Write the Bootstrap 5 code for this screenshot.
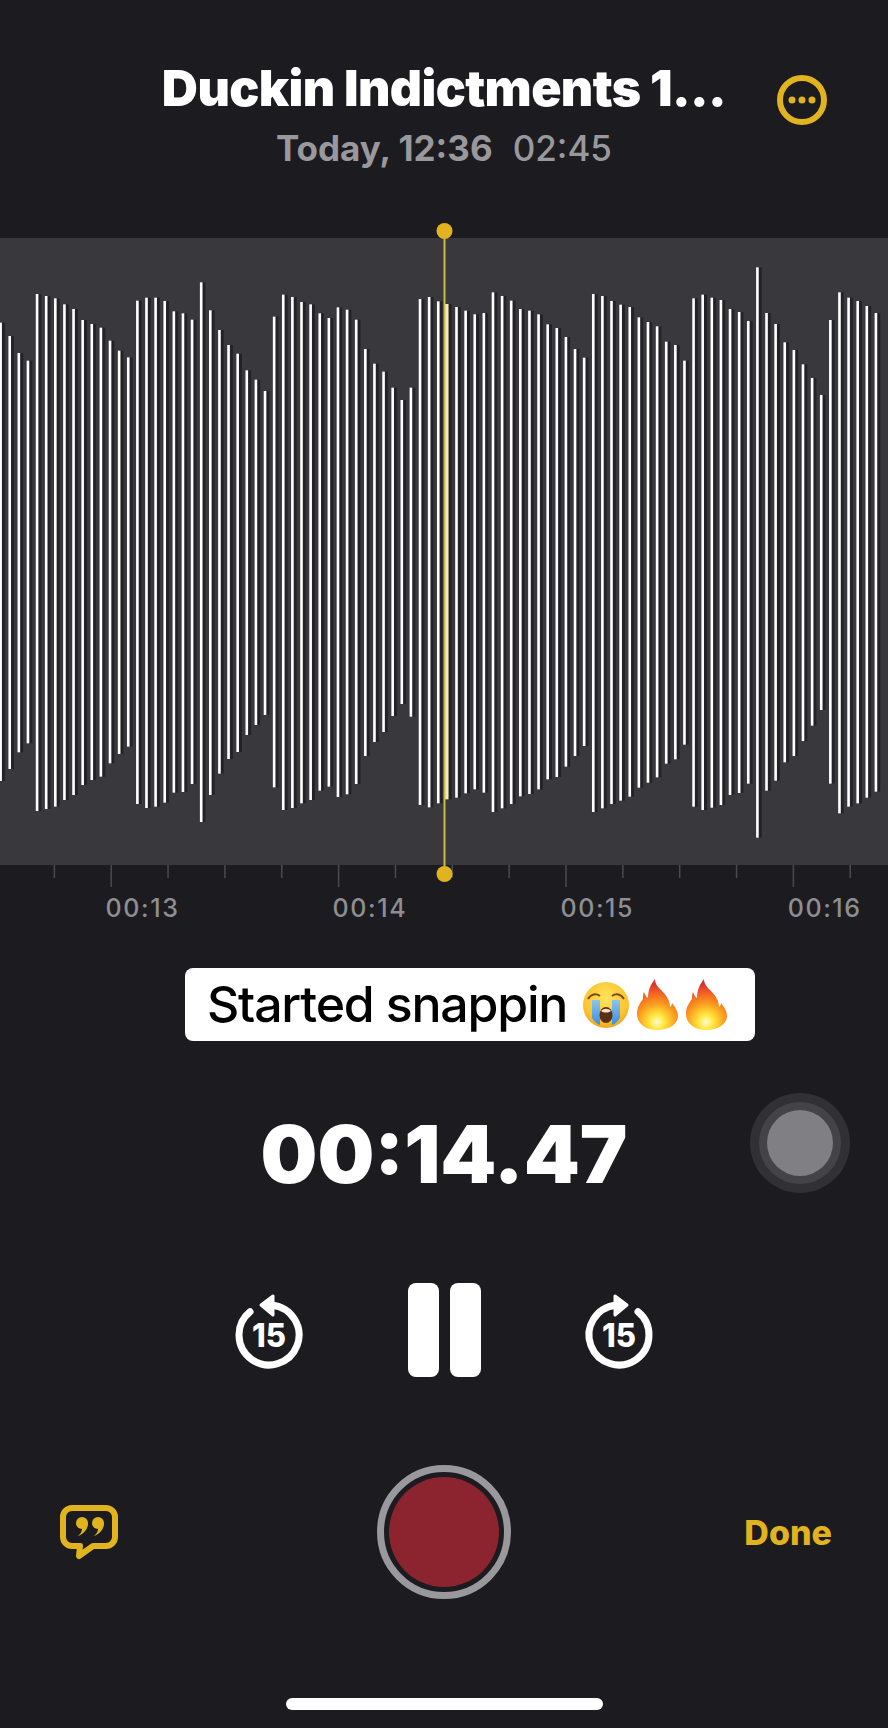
<!DOCTYPE html>
<html lang="en">
<head>
  <meta charset="UTF-8" />
  <meta name="viewport" content="width=device-width, initial-scale=1.0"/>
  <title>Voice Memos</title>
  <link href="https://cdn.jsdelivr.net/npm/bootstrap@5.3.0/dist/css/bootstrap.min.css" rel="stylesheet"/>
  <style>
    body {
      background-color: #1c1b1f;
      font-family: 'Inter', 'Liberation Sans', sans-serif;
      color: #fff;
      width: 888px;
      height: 1728px;
      overflow: hidden;
    }
    .three-col {
      display: grid;
      grid-template-columns: 1fr auto 1fr;
      align-items: center;
    }
    .top-head { height: 220px; padding-top: 60px; align-items: start; }
    .memo-title {
      font-size: 50px;
      font-weight: 900;
      line-height: 56px;
      letter-spacing: -0.6px;
      white-space: nowrap;
    }
    .memo-meta {
      font-size: 35px;
      line-height: 40px;
      color: #98989d;
      margin-top: 12px;
      font-weight: 700;
      text-align: center;
    }
    .memo-meta span { font-weight: 500; margin-left: 20px; }
    .more-btn { justify-self: start; margin: 14px 0 0 50px; }
    .wave-stage { height: 705px; }
    .wave-stage svg { display: block; }
    .tick-label { font-size: 25px; font-weight: 500; fill: #8e8e93; letter-spacing: 1.6px; font-family: 'Inter', sans-serif; }
    .caption-box {
      margin: 43px 0 0 185px;
      width: 570px;
      height: 73px;
      background: #fff;
      border-radius: 8px;
      color: #000;
      padding-left: 22px;
      font-size: 50px;
      font-family: 'Inter', 'Liberation Sans', sans-serif;
      font-weight: 500;
      letter-spacing: -1.2px;
    }
    .time-row { margin-top: 52px; height: 100px; }
    .time-text {
      font-size: 80px;
      font-weight: 900;
      line-height: 78px;
      margin-top: 22px;
    }
    .jog-outer {
      justify-self: start;
      margin-left: 140px;
      width: 66px;
      height: 66px;
      border-radius: 50%;
      background: #808084;
      box-shadow: 0 0 0 8px #444448, 0 0 0 17px #313135;
    }
    .transport { margin-top: 87px; gap: 84px; }
    .transport svg text { font-family: 'Inter', sans-serif; font-weight: 800; fill: #fff; }
    .pause-icon { margin-top: 3px; gap: 11px; }
    .pause-icon i { display: block; width: 31px; height: 94px; background: #fff; border-radius: 8px; }
    .bottom-row { margin-top: 84px; height: 135px; }
    .rec-ring {
      width: 134px;
      height: 134px;
      border-radius: 50%;
      border: 7px solid #98989d;
      padding: 5px;
    }
    .rec-dot { width: 100%; height: 100%; border-radius: 50%; background: #8c2430; }
    .quote-btn { justify-self: start; margin-left: 60px; }
    .done-btn {
      justify-self: end;
      margin: 2px 56px 0 0;
      color: #e0b31f;
      font-size: 34px;
      font-weight: 800;
    }
    .home-bar {
      margin: 99px auto 0;
      width: 317px;
      height: 12px;
      border-radius: 6px;
      background: #fff;
    }
  </style>
</head>
<body>
  <svg width="0" height="0" class="position-absolute">
    <defs>
      <radialGradient id="fireFill" gradientUnits="userSpaceOnUse" cx="20" cy="43" r="38">
        <stop offset="0" stop-color="#fffbd0"/>
        <stop offset="0.2" stop-color="#ffe63c"/>
        <stop offset="0.5" stop-color="#fb9a1e"/>
        <stop offset="0.8" stop-color="#ef5a26"/>
        <stop offset="1" stop-color="#d9322a"/>
      </radialGradient>
      <radialGradient id="faceFill" cx="0.5" cy="0.35" r="0.7">
        <stop offset="0" stop-color="#ffe45c"/>
        <stop offset="0.7" stop-color="#fcc22e"/>
        <stop offset="1" stop-color="#ef9a1c"/>
      </radialGradient>
      <linearGradient id="tearFill" x1="0" y1="0" x2="0" y2="1">
        <stop offset="0" stop-color="#8cc4ee"/>
        <stop offset="1" stop-color="#3b8fe0"/>
      </linearGradient>
      <symbol id="fireGlyph" viewBox="0 0 41 51">
        <path fill="url(#fireFill)" d="M20 51C8 51 0 44 0 35c0-7 3-11 6-15 0-3 0-5 1-7 1 3 2 5 4 6 0-8 3-14 7-19 0 5 3 8 7 12 5 5 8 10 8 16 1-1 2-2 2-4 3 4 6 8 6 13 0 8-9 14-21 14z"/>
      </symbol>
    </defs>
  </svg>

  <header class="three-col top-head">
    <div></div>
    <div>
      <div class="memo-title">Duckin Indictments 1...</div>
      <div class="memo-meta">Today, 12:36<span>02:45</span></div>
    </div>
    <svg class="more-btn" width="52" height="52" viewBox="0 0 52 52">
      <circle cx="26" cy="26" r="22" fill="none" stroke="#e0b31f" stroke-width="6"/>
      <circle cx="16" cy="26" r="3.5" fill="#e0b31f"/>
      <circle cx="26" cy="26" r="3.5" fill="#e0b31f"/>
      <circle cx="36" cy="26" r="3.5" fill="#e0b31f"/>
    </svg>
  </header>

  <section class="wave-stage">
    <svg id="wave" width="888" height="705" viewBox="0 0 888 705"></svg>
  </section>

  <div class="caption-box d-flex align-items-center">
    <span>Started snappin</span>
    <svg class="ms-3" width="46" height="48" viewBox="0 0 46 48">
      <circle cx="23" cy="24" r="23" fill="url(#faceFill)"/>
      <path d="M5 18c3-5 8-6 12-3M41 18c-3-5-8-6-12-3" fill="none" stroke="#7a4a12" stroke-width="2"/>
      <path d="M9 19h8v25c-3-1-6-4-8-7zM29 19h8v18c-2 3-5 6-8 7z" fill="url(#tearFill)"/>
      <ellipse cx="23" cy="34" rx="6.500" ry="8" fill="#5b2f12"/>
      <path d="M18 30c3-3 7-3 10 0-3 2-7 2-10 0z" fill="#f3e2c6"/>
    </svg>
    <svg class="ms-2" width="41" height="51"><use href="#fireGlyph"/></svg>
    <svg class="ms-2" width="41" height="51"><use href="#fireGlyph"/></svg>
  </div>

  <div class="three-col time-row">
    <div></div>
    <div class="time-text">00:14.47</div>
    <div class="jog-outer"></div>
  </div>

  <div class="transport d-flex justify-content-center align-items-start">
    <svg width="110" height="100" viewBox="-6 0 110 100">
      <path d="M30 31.800A30 30 0 1 0 52 25.150" fill="none" stroke="#fff" stroke-width="7" stroke-linecap="round"/>
      <path d="M41 25 53 16V35z" fill="#fff" stroke="#fff" stroke-width="3" stroke-linejoin="round"/>
      <text x="49" y="67" font-size="33" text-anchor="middle" textLength="34" lengthAdjust="spacingAndGlyphs">15</text>
    </svg>
    <div class="pause-icon d-flex"><i></i><i></i></div>
    <svg width="110" height="100" viewBox="-5 0 110 100">
      <path d="M68 31.800A30 30 0 1 1 46 25.150" fill="none" stroke="#fff" stroke-width="7" stroke-linecap="round"/>
      <path d="M57 25 45 16V35z" fill="#fff" stroke="#fff" stroke-width="3" stroke-linejoin="round"/>
      <text x="49" y="67" font-size="33" text-anchor="middle" textLength="34" lengthAdjust="spacingAndGlyphs">15</text>
    </svg>
  </div>

  <div class="three-col bottom-row">
    <svg class="quote-btn" width="58" height="56" viewBox="0 0 58 56">
      <path d="M12 4H46A9 9 0 0 1 55 13V33A9 9 0 0 1 46 42H33L19 52 20 42H12A9 9 0 0 1 3 33V13A9 9 0 0 1 12 4Z" fill="none" stroke="#e0b31f" stroke-width="6" stroke-linejoin="round"/>
      <g fill="#e0b31f">
        <circle cx="22" cy="19" r="6"/>
        <path d="M28 19c0 6-4 11-10 13 2-2 4-4 4-7z"/>
        <circle cx="38" cy="19" r="6"/>
        <path d="M44 19c0 6-4 11-10 13 2-2 4-4 4-7z"/>
      </g>
    </svg>
    <div class="rec-ring"><div class="rec-dot"></div></div>
    <div class="done-btn">Done</div>
  </div>

  <div class="home-bar"></div>

  <script src="https://cdn.jsdelivr.net/npm/bootstrap@5.3.0/dist/js/bootstrap.bundle.min.js"></script>
  <script>
    // bar ends read off the reference, in 1/3 px from y=230 and y=680
    const tops = [278,318,369,392,192,198,205,223,237,270,282,293,332,362,382,212,203,203,213,244,250,269,157,241,300,345,371,421,449,483,260,194,201,216,223,250,264,232,239,269,357,401,425,473,510,473,207,201,214,
      222,231,242,253,249,187,198,212,237,242,253,283,294,321,357,383,192,198,213,224,231,262,276,289,335,345,392,205,194,203,210,237,246,273,112,249,282,337,360,403,444,495,270,187,203,213,228,249];
    const bottoms = [303,267,217,190,393,387,380,360,345,315,300,290,250,222,200,372,384,380,368,338,336,312,426,345,281,237,216,165,135,105,322,390,384,370,360,332,320,351,343,312,228,186,156,108,72,110,375,382,370,
      358,353,340,328,338,396,385,372,349,342,328,298,291,260,228,198,396,385,372,362,350,323,308,292,251,238,194,380,390,383,375,345,339,311,473,332,302,247,228,183,137,90,311,400,380,370,353,335];

    const originY = 220;
    let out = `<rect x="0" y="18" width="888" height="627" fill="#38383d"/>`;

    tops.forEach((t, i) => {
      const x = 0.6 + 9.118 * i;
      const y1 = 230 + t / 3 - originY;
      const y2 = 680 + bottoms[i] / 3 - originY;
      out += `<rect x="${x + 1.3}" y="${y1}" width="3" height="${y2 - y1}" fill="#1c1b1f" opacity=".75"/>`;
      if (i === 49) {
        out += `<rect x="445" y="${y1}" width="3.5" height="${y2 - y1}" fill="#f2edc0"/>`;
      } else {
        out += `<rect x="${x - 1.3}" y="${y1}" width="2.6" height="${y2 - y1}" fill="#fff"/>`;
      }
    });

    // ruler: a tick every 56.8px, long one every fourth
    for (let n = 0; n < 15; n++) {
      const x = 53.6 + 56.85 * n;
      const long = n % 4 === 1;
      out += `<rect x="${x}" y="645" width="1.5" height="${long ? 22 : 13}" fill="#4a4a4e"/>`;
    }
    ["00:13", "00:14", "00:15", "00:16"].forEach((label, i) => {
      out += `<text class="tick-label" x="${142.5 + 227.4 * i}" y="697" text-anchor="middle">${label}</text>`;
    });

    // playhead
    out += `<rect x="443.500" y="11" width="2" height="643" fill="#c9bb45"/>`;
    out += `<circle cx="444.500" cy="11" r="8" fill="#e0b31f"/><circle cx="444.500" cy="654" r="8" fill="#e0b31f"/>`;

    document.querySelector("#wave").innerHTML = out;
  </script>
</body>
</html>
